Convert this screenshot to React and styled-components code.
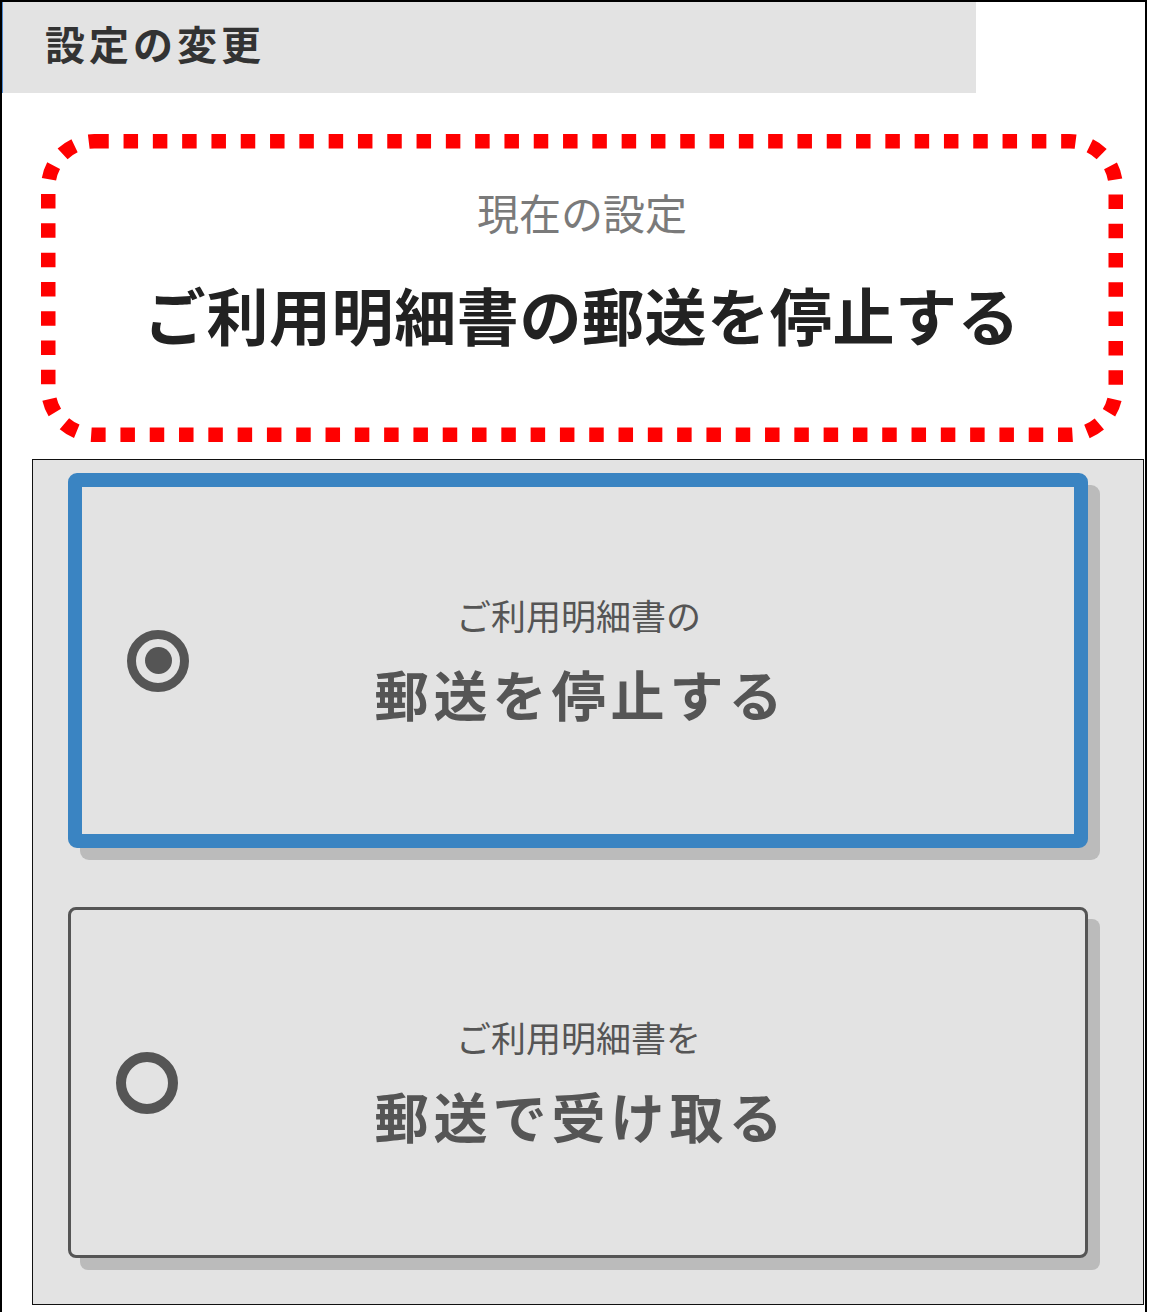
import React from 'react';
import styled, { createGlobalStyle } from 'styled-components';

const GlobalStyle = createGlobalStyle`
  html, body {
    margin: 0;
    padding: 0;
    background: #ffffff;
  }
  body {
    font-family: "Noto Sans CJK JP", "Noto Sans", sans-serif;
  }
`;

const Frame = styled.div`
  width: 1143px;
  border: 2px solid #000;
  padding-bottom: 40px;
  background: #fff;
`;

const Header = styled.div`
  width: 974px;
  height: 91px;
  background: #e3e3e3;
  border-left: 1px solid #4f8ad0;
  box-sizing: border-box;
  padding-left: 42px;
  display: flex;
  align-items: center;
`;

const HeaderTitle = styled.h1`
  margin: 0;
  font-size: 40px;
  font-weight: 700;
  letter-spacing: 4px;
  color: #333;
  line-height: 1;
  padding-bottom: 10px;
`;

const CurrentBox = styled.div`
  position: relative;
  box-sizing: border-box;
  width: 1082px;
  height: 308px;
  margin: 41px 0 0 39px;
  padding-top: 57px;
  display: flex;
  flex-direction: column;
  align-items: center;
  gap: 50px;
`;

const DashBorder = styled.svg`
  position: absolute;
  inset: 0;
  pointer-events: none;
`;

const CurrentLabel = styled.div`
  font-size: 42px;
  color: #7a7a7a;
  line-height: 1;
`;

const CurrentValue = styled.div`
  font-size: 62px;
  font-weight: 700;
  color: #222;
  line-height: 1;
  letter-spacing: 0.6px;
`;

const Panel = styled.div`
  margin: 17px 0 0 30px;
  width: 1112px;
  box-sizing: border-box;
  border: 1px solid #111;
  background: #e3e3e3;
  padding: 13px 55px 46px 35px;
  display: flex;
  flex-direction: column;
  gap: 59px;
`;

const OptionCard = styled.label`
  box-sizing: border-box;
  width: 1020px;
  height: ${p => (p.$selected ? 375 : 351)}px;
  border: ${p => (p.$selected ? '14px solid #3a84c2' : '3px solid #555')};
  border-radius: ${p => (p.$selected ? 9 : 8)}px;
  box-shadow: 12px 12px 0 #bbbbbb;
  background: #e3e3e3;
  padding: 0 44px 0 45px;
  display: grid;
  grid-template-columns: 1fr auto 1fr;
  align-items: center;
  cursor: pointer;
`;

const Radio = styled.span`
  justify-self: start;
  box-sizing: border-box;
  width: 62px;
  height: 62px;
  border-radius: 50%;
  border: ${p => (p.$checked ? 9 : 10)}px solid #555;
  display: flex;
  align-items: center;
  justify-content: center;
  &::after {
    content: '';
    display: ${p => (p.$checked ? 'block' : 'none')};
    width: 27px;
    height: 27px;
    border-radius: 50%;
    background: #555;
  }
`;

const OptionText = styled.div`
  display: flex;
  flex-direction: column;
  align-items: center;
  gap: 35px;
  color: #555;
  line-height: 1;
  margin-top: -4px;
`;

const OptionSub = styled.div`
  font-size: 35px;
`;

const OptionMain = styled.div`
  font-size: 54px;
  font-weight: 700;
  letter-spacing: 5px;
  margin-right: -5px;
`;

const options = [
  { id: 'stop', sub: 'ご利用明細書の', main: '郵送を停止する' },
  { id: 'mail', sub: 'ご利用明細書を', main: '郵送で受け取る' },
];

export default function App() {
  const [value, setValue] = React.useState('stop');
  return (
    <>
      <GlobalStyle />
      <Frame>
        <Header>
          <HeaderTitle>設定の変更</HeaderTitle>
        </Header>
        <CurrentBox>
          <DashBorder width="1082" height="308" viewBox="0 0 1082 308">
            <rect
              x="7.25"
              y="7.25"
              width="1067.5"
              height="293.5"
              rx="46"
              fill="none"
              stroke="#ff0000"
              strokeWidth="14.5"
              strokeDasharray="14.5 14.8"
            />
          </DashBorder>
          <CurrentLabel>現在の設定</CurrentLabel>
          <CurrentValue>ご利用明細書の郵送を停止する</CurrentValue>
        </CurrentBox>
        <Panel>
          {options.map(o => (
            <OptionCard key={o.id} $selected={value === o.id} onClick={() => setValue(o.id)}>
              <Radio $checked={value === o.id} />
              <OptionText>
                <OptionSub>{o.sub}</OptionSub>
                <OptionMain>{o.main}</OptionMain>
              </OptionText>
              <span />
            </OptionCard>
          ))}
        </Panel>
      </Frame>
    </>
  );
}
